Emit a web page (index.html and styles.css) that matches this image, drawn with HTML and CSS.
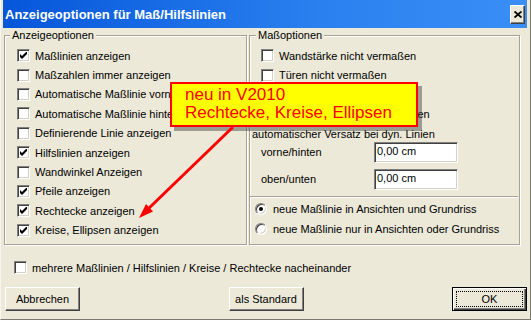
FILE: index.html
```html
<!DOCTYPE html>
<html lang="de">
<head>
<meta charset="UTF-8">
<meta name="viewport" content="width=device-width, initial-scale=1.0">
<title>Anzeigeoptionen für Maß/Hilfslinien</title>
<link rel="stylesheet" href="styles.css">
</head>
<body>
<div class="window">
    <div class="titlebar">
        <span class="title">Anzeigeoptionen für Maß/Hilfslinien</span>
        <span class="close"><svg width="8" height="7" viewBox="0 0 8 7"><path d="M0.5 0.5l7 6M7.5 0.5l-7 6" stroke="#000" stroke-width="1.8"/></svg></span>
    </div>
    <div class="client">
        <div class="groups">
            <div class="group group-left">
                <span class="legend">Anzeigeoptionen</span>
                <div class="rows">
                    <label class="check"><span class="box"><svg width="7" height="7" viewBox="0 0 7 7"><polygon points="0,2 2,4 7,-1 7,2 2,7 0,5"/></svg></span>Maßlinien anzeigen</label>
                    <label class="check"><span class="box"></span>Maßzahlen immer anzeigen</label>
                    <label class="check"><span class="box"></span>Automatische Maßlinie vorne</label>
                    <label class="check"><span class="box"></span>Automatische Maßlinie hinten</label>
                    <label class="check"><span class="box"></span>Definierende Linie anzeigen</label>
                    <label class="check"><span class="box"><svg width="7" height="7" viewBox="0 0 7 7"><polygon points="0,2 2,4 7,-1 7,2 2,7 0,5"/></svg></span>Hilfslinien anzeigen</label>
                    <label class="check"><span class="box"></span>Wandwinkel Anzeigen</label>
                    <label class="check"><span class="box"><svg width="7" height="7" viewBox="0 0 7 7"><polygon points="0,2 2,4 7,-1 7,2 2,7 0,5"/></svg></span>Pfeile anzeigen</label>
                    <label class="check"><span class="box"><svg width="7" height="7" viewBox="0 0 7 7"><polygon points="0,2 2,4 7,-1 7,2 2,7 0,5"/></svg></span>Rechtecke anzeigen</label>
                    <label class="check"><span class="box"><svg width="7" height="7" viewBox="0 0 7 7"><polygon points="0,2 2,4 7,-1 7,2 2,7 0,5"/></svg></span>Kreise, Ellipsen anzeigen</label>
                </div>
            </div>
            <div class="group group-right">
                <span class="legend">Maßoptionen</span>
                <div class="rows">
                    <label class="check"><span class="box"></span>Wandstärke nicht vermaßen</label>
                    <label class="check"><span class="box"></span>Türen nicht vermaßen</label>
                    <label class="check"><span class="box"></span>Fenster nicht vermaßen</label>
                    <label class="check"><span class="box"></span>Maßketten an allen Wandlinien</label>
                </div>
                <div class="versatz-title"><span>automatischer Versatz bei dyn. Linien</span></div>
                <div class="field"><span class="field-label">vorne/hinten</span><span class="input">0,00 cm</span></div>
                <div class="field field-2"><span class="field-label">oben/unten</span><span class="input">0,00 cm</span></div>
                <div class="separator"></div>
                <label class="radio"><span class="dot checked"></span>neue Maßlinie in Ansichten und Grundriss</label>
                <label class="radio"><span class="dot"></span>neue Maßlinie nur in Ansichten oder Grundriss</label>
            </div>
        </div>
        <label class="check bottom-check"><span class="box"></span>mehrere Maßlinien / Hilfslinien / Kreise / Rechtecke nacheinander</label>
        <div class="buttons">
            <span class="btn">Abbrechen</span>
            <span class="btn">als Standard</span>
            <span class="btn btn-ok">OK</span>
        </div>
    </div>

    <div class="callout">neu in V2010<br>Rechtecke, Kreise, Ellipsen</div>
    <svg class="arrow" width="531" height="320" viewBox="0 0 531 320">
        <line x1="233" y1="127" x2="147" y2="210" stroke="#f00" stroke-width="3"/>
        <polygon points="139,218 153,211.5 146,204" fill="#f00"/>
    </svg>
</div>
</body>
</html>
```

FILE: styles.css
```css
*{margin:0;padding:0;box-sizing:border-box}
body{font-family:"Liberation Sans",Arial,sans-serif;font-size:11px;color:#000;background:#ECE9D8}
.window{position:relative;width:531px;height:320px;padding:0 3px 1px 2px;background:#ECE9D8;border-left:1px solid #f6f5ef;border-right:1px solid #7b7a72;border-bottom:1px solid #7b7a72;overflow:hidden}

.titlebar{height:28px;display:flex;align-items:center;justify-content:space-between;padding:0 2px;background:linear-gradient(90deg,#0656da 0%,#2a80ef 60%,#3a8ef6 100%)}
.title{color:#fff;font-weight:bold;font-size:13px}
.close{width:15px;height:19px;display:flex;align-items:center;justify-content:center;background:#ECE9D8;border:1px solid;border-color:#fff #404040 #404040 #fff;box-shadow:inset -1px -1px #808080}

.groups{display:flex;gap:2px;margin:7px 0 0 1px}
.group{height:210px;border:1px solid #a5a294;box-shadow:inset 1px 1px #fff,1px 1px #fff}
.group-left{width:243px;padding-left:12px}
.group-right{width:271px;padding-left:11px}
.legend{display:table;margin-top:-7px;padding:0 2px;line-height:13px;background:#ECE9D8}
.group-left .legend{margin-left:-7px}
.group-right .legend{margin-left:-5px}
.rows{padding-top:4px}

.check{display:flex;align-items:center;gap:5px;height:19.4px;white-space:nowrap}
.box{flex:none;width:13px;height:13px;display:flex;align-items:center;justify-content:center;background:#fff;border:1px solid;border-color:#808080 #fff #fff #808080;box-shadow:inset 1px 1px #404040,inset -1px -1px #d4d0c8}

.versatz-title{display:flex;align-items:center;width:183px;margin:4px 0 0 -11px;line-height:13px;white-space:nowrap}
.versatz-title span{padding:0 2px}
.versatz-title::before,.versatz-title::after{content:"";height:2px;border-top:1px solid #a5a294;border-bottom:1px solid #fff}
.versatz-title::before{width:5px}
.versatz-title::after{flex:1}
.field{display:flex;align-items:center;height:21px;margin-top:1px}
.field-2{margin-top:6px}
.field-label{width:113px}
.input{width:84px;height:21px;padding:2px 0 0 2px;line-height:13px;background:#fff;border:1px solid;border-color:#808080 #fff #fff #808080;box-shadow:inset 1px 1px #404040,inset -1px -1px #d4d0c8}
.separator{width:268px;height:2px;margin:6px 0 1px -11px;border-top:1px solid #a5a294;border-bottom:1px solid #fff}

.radio{display:flex;align-items:center;gap:6px;height:20px;margin-left:-6px;white-space:nowrap}
.dot{flex:none;width:12px;height:12px;border-radius:50%;display:flex;align-items:center;justify-content:center;background:#fff;border:1px solid;border-color:#808080 #fff #fff #808080;box-shadow:inset 1px 1px #404040,inset -1px -1px #d4d0c8}
.dot.checked::after{content:"";width:4px;height:4px;border-radius:50%;background:#000}

.bottom-check{height:19px;margin:13px 0 0 11px}
.buttons{display:flex;justify-content:space-between;margin-top:10px;padding-left:2px}
.btn{position:relative;width:75px;height:24px;display:flex;align-items:center;justify-content:center;border:1px solid;border-color:#fff #404040 #404040 #fff;box-shadow:inset -1px -1px #808080}
.btn-ok{border-color:#000;box-shadow:inset 1px 1px #fff,inset -1px -1px #404040,inset -2px -2px #808080}
.btn-ok::after{content:"";position:absolute;inset:3px;border:1px dotted #000}

.callout{position:absolute;left:169px;top:82px;z-index:2;width:248px;height:45px;padding:2px 0 0 13px;font-size:17px;line-height:18px;color:#f00;background:#ff0;border:2px solid #f00;box-shadow:4px 4px 0 rgba(60,60,60,.45)}
.arrow{position:absolute;left:-1px;top:0;z-index:3;pointer-events:none}
```
